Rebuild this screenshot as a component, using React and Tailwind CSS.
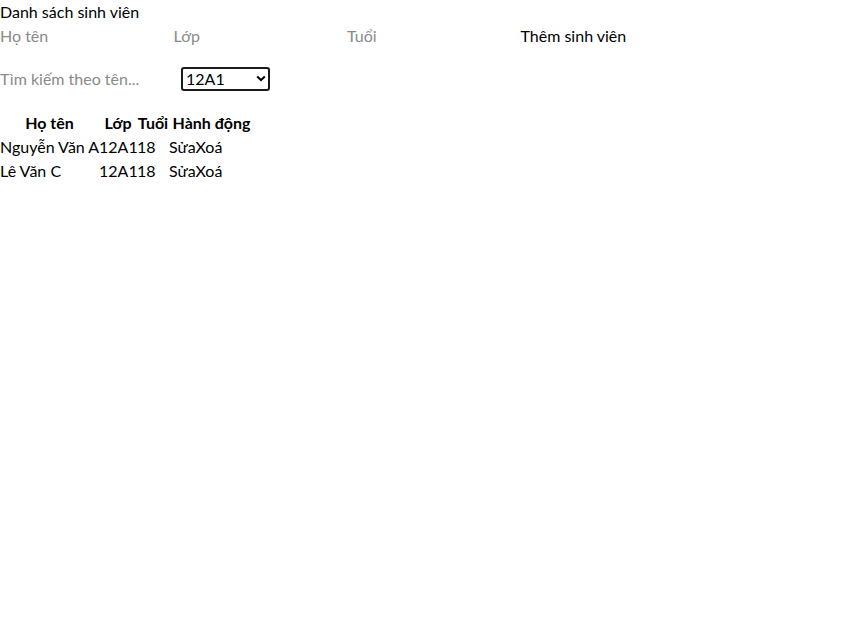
export default function App() {
  const students = [
    { name: "Nguyễn Văn A", cls: "12A1", age: 18 },
    { name: "Lê Văn C", cls: "12A1", age: 18 },
  ];
  return (
    <div className="text-base leading-6 text-black" style={{ fontFamily: '"Lato", "Noto Sans", sans-serif' }}>
      <h1 className="text-base font-normal leading-6">Danh sách sinh viên</h1>
      <form className="flex h-6 items-center" onSubmit={(e) => e.preventDefault()}>
        <input className="w-[173.5px] h-6 outline-none placeholder:text-[#8a8a8a]" placeholder="Họ tên" />
        <input className="w-[173.5px] h-6 outline-none placeholder:text-[#8a8a8a]" placeholder="Lớp" />
        <input className="w-[173.5px] h-6 outline-none placeholder:text-[#8a8a8a]" placeholder="Tuổi" />
        <button type="submit" className="h-6 cursor-pointer">Thêm sinh viên</button>
      </form>
      <div className="mt-[19px] flex h-6 items-center">
        <input className="w-[181px] h-6 outline-none placeholder:text-[#8a8a8a]" placeholder="Tìm kiếm theo tên..." />
        <div className="relative h-6 w-[89px]">
          <select defaultValue="12A1" className="h-6 w-[89px] appearance-none rounded-[3px] border-2 border-[#1a1a1a] pl-[3px] text-base leading-5 outline-none">
            <option>12A1</option>
            <option>12A2</option>
          </select>
          <svg className="pointer-events-none absolute right-[4px] top-[8px]" width="10" height="7" viewBox="0 0 10 7">
            <path d="M1.2 1.4 L5 5 L8.8 1.4" fill="none" stroke="black" strokeWidth="2" />
          </svg>
        </div>
      </div>
      <table className="mt-5 border-collapse table-fixed w-[254px]">
        <colgroup>
          <col className="w-[99px]" />
          <col className="w-[38px]" />
          <col className="w-[32px]" />
          <col className="w-[85px]" />
        </colgroup>
        <thead>
          <tr className="h-6">
            <th className="p-0 text-center font-bold whitespace-nowrap">Họ tên</th>
            <th className="p-0 text-center font-bold whitespace-nowrap">Lớp</th>
            <th className="p-0 text-center font-bold whitespace-nowrap">Tuổi</th>
            <th className="p-0 text-center font-bold whitespace-nowrap">Hành động</th>
          </tr>
        </thead>
        <tbody>
          {students.map((s) => (
            <tr key={s.name} className="h-6">
              <td className="p-0 whitespace-nowrap">{s.name}</td>
              <td className="p-0 whitespace-nowrap">{s.cls}</td>
              <td className="p-0 whitespace-nowrap">{s.age}</td>
              <td className="p-0 whitespace-nowrap">
                <button className="cursor-pointer">Sửa</button>
                <button className="cursor-pointer">Xoá</button>
              </td>
            </tr>
          ))}
        </tbody>
      </table>
    </div>
  );
}
